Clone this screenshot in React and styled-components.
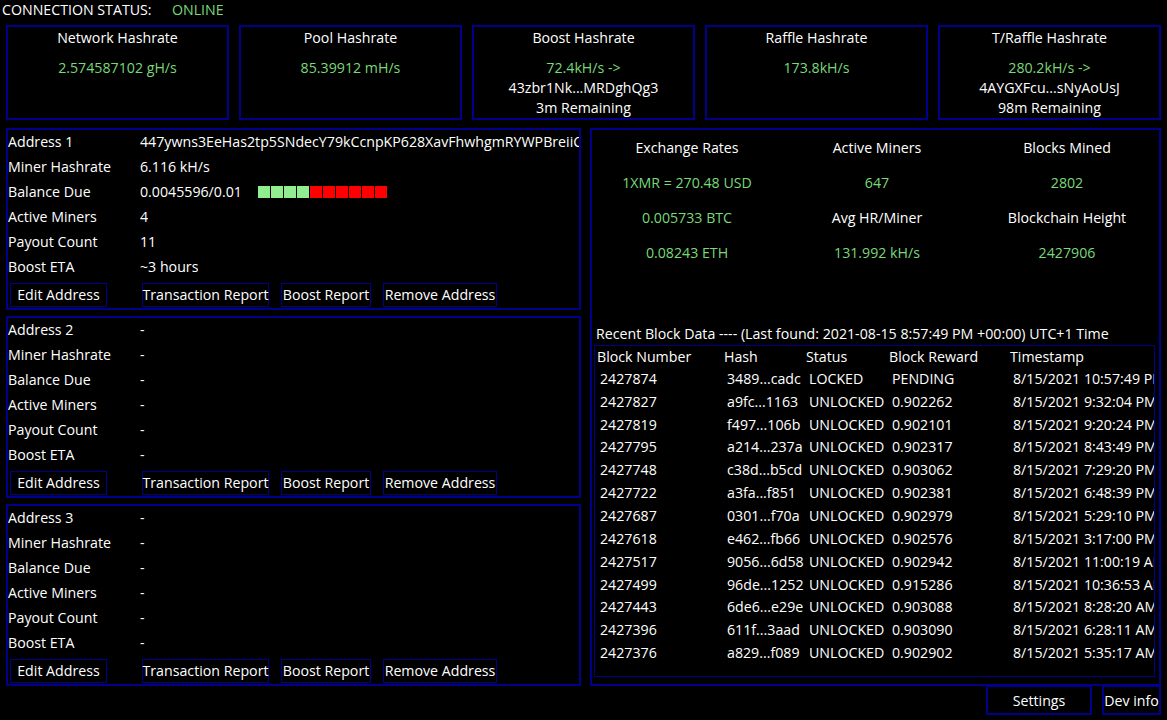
import React from "react";
import styled, { createGlobalStyle } from "styled-components";

const Global = createGlobalStyle`
  html, body { margin: 0; padding: 0; background: #000; }
  body { font-family: "Open Sans", "Noto Sans", sans-serif; font-size: 14.2px; color: #fff; }
  * { box-sizing: border-box; }
`;

const BLUE = "#00008b";
const GREEN = "#79d879";

const Page = styled.div`
  width: 1167px;
  height: 720px;
  background: #000;
  display: flex;
  flex-direction: column;
  overflow: hidden;
`;

const StatusBar = styled.div`
  height: 25px;
  display: flex;
  align-items: flex-start;
  padding: 0 0 0 2px;
  line-height: 20px;
  white-space: nowrap;
`;

const StatusLabel = styled.span`
  width: 170px;
`;

const Green = styled.span`
  color: ${GREEN};
`;

const Cards = styled.div`
  display: grid;
  grid-template-columns: repeat(5, 1fr);
  gap: 10px;
  padding: 0 6px;
  height: 93px;
`;

const Card = styled.div`
  border: 2px solid ${BLUE};
  display: flex;
  flex-direction: column;
  align-items: center;
  padding-top: 1px;
  line-height: 20px;
  white-space: nowrap;
`;

const CardTitle = styled.div`
  margin-bottom: 10px;
`;

const CardLine = styled.div`
  color: ${(p) => (p.$green ? GREEN : "#fff")};
`;

const Main = styled.div`
  margin-top: 10px;
  display: grid;
  grid-template-columns: 575px 571px;
  gap: 9px;
  padding-left: 6px;
  height: 557px;
`;

const LeftCol = styled.div`
  display: flex;
  flex-direction: column;
  gap: 6px;
`;

const AddressPanel = styled.div`
  border: 2px solid ${BLUE};
  height: 182px;
  display: flex;
  flex-direction: column;
  overflow: hidden;
`;

const InfoRow = styled.div`
  height: 25px;
  padding-bottom: 3px;
  display: flex;
  align-items: center;
  white-space: nowrap;
`;

const InfoLabel = styled.div`
  width: 132px;
  flex: none;
`;

const InfoValue = styled.div`
  display: flex;
  align-items: center;
  overflow: hidden;
`;

const Bar = styled.div`
  display: flex;
  gap: 1px;
  margin-left: 16px;
  margin-top: 2px;
`;

const Cell = styled.div`
  width: 12px;
  height: 12px;
  background: ${(p) => (p.$on ? "#90ee90" : "#ff0000")};
`;

const ButtonRow = styled.div`
  display: flex;
  margin-top: 3px;
`;

const Btn = styled.div`
  height: 24px;
  width: ${(p) => p.$w}px;
  margin-left: ${(p) => p.$ml}px;
  border: 1px solid ${BLUE};
  display: flex;
  align-items: center;
  justify-content: center;
  white-space: nowrap;
  padding-bottom: 1px;
`;

const RightPanel = styled.div`
  border: 2px solid ${BLUE};
  display: flex;
  flex-direction: column;
  overflow: hidden;
`;

const StatsGrid = styled.div`
  display: grid;
  grid-template-columns: repeat(3, 190px);
  grid-auto-rows: 35px;
`;

const Stat = styled.div`
  display: flex;
  align-items: center;
  justify-content: center;
  white-space: nowrap;
  padding-bottom: 1px;
  color: ${(p) => (p.$green ? GREEN : "#fff")};
`;

const RecentTitle = styled.div`
  margin-top: 54px;
  padding-left: 4px;
  height: 21px;
  line-height: 20px;
  white-space: nowrap;
`;

const Table = styled.div`
  margin: 0 4px 0 2px;
  height: 332px;
  border: 1px solid ${BLUE};
  overflow: hidden;
`;

const TRow = styled.div`
  display: grid;
  grid-template-columns: 127px 82px 83px 121px 200px;
  height: ${(p) => (p.$head ? 21 : 22.85)}px;
  align-items: center;
  white-space: nowrap;
`;

const TCell = styled.div`
  padding-left: ${(p) => (p.$head ? 2 : 5)}px;
`;

const Footer = styled.div`
  display: flex;
  justify-content: flex-end;
  gap: 10px;
  padding-right: 6px;
  height: 30px;
`;

const FooterBtn = styled.div`
  width: ${(p) => p.$w}px;
  border: 2px solid ${BLUE};
  display: flex;
  align-items: center;
  justify-content: center;
  white-space: nowrap;
`;

const cards = [
  { title: "Network Hashrate", lines: [["2.574587102 gH/s", true]] },
  { title: "Pool Hashrate", lines: [["85.39912 mH/s", true]] },
  {
    title: "Boost Hashrate",
    lines: [
      ["72.4kH/s ->", true],
      ["43zbr1Nk...MRDghQg3", false],
      ["3m Remaining", false],
    ],
  },
  { title: "Raffle Hashrate", lines: [["173.8kH/s", true]] },
  {
    title: "T/Raffle Hashrate",
    lines: [
      ["280.2kH/s ->", true],
      ["4AYGXFcu...sNyAoUsJ", false],
      ["98m Remaining", false],
    ],
  },
];

const labels = ["Miner Hashrate", "Balance Due", "Active Miners", "Payout Count", "Boost ETA"];

const addresses = [
  {
    name: "Address 1",
    addr: "447ywns3EeHas2tp5SNdecY79kCcnpKP628XavFhwhgmRYWPBreiiC",
    values: ["6.116 kH/s", "0.0045596/0.01", "4", "11", "~3 hours"],
    bar: 4,
  },
  { name: "Address 2", addr: "-", values: ["-", "-", "-", "-", "-"] },
  { name: "Address 3", addr: "-", values: ["-", "-", "-", "-", "-"] },
];

const buttons = [
  ["Edit Address", 97, 2],
  ["Transaction Report", 127, 35],
  ["Boost Report", 90, 12],
  ["Remove Address", 114, 12],
];

const stats = [
  ["Exchange Rates", false],
  ["Active Miners", false],
  ["Blocks Mined", false],
  ["1XMR = 270.48 USD", true],
  ["647", true],
  ["2802", true],
  ["0.005733 BTC", true],
  ["Avg HR/Miner", false],
  ["Blockchain Height", false],
  ["0.08243 ETH", true],
  ["131.992 kH/s", true],
  ["2427906", true],
];

const blocks = [
  ["2427874", "3489...cadc", "LOCKED", "PENDING", "8/15/2021 10:57:49 PM"],
  ["2427827", "a9fc...1163", "UNLOCKED", "0.902262", "8/15/2021 9:32:04 PM"],
  ["2427819", "f497...106b", "UNLOCKED", "0.902101", "8/15/2021 9:20:24 PM"],
  ["2427795", "a214...237a", "UNLOCKED", "0.902317", "8/15/2021 8:43:49 PM"],
  ["2427748", "c38d...b5cd", "UNLOCKED", "0.903062", "8/15/2021 7:29:20 PM"],
  ["2427722", "a3fa...f851", "UNLOCKED", "0.902381", "8/15/2021 6:48:39 PM"],
  ["2427687", "0301...f70a", "UNLOCKED", "0.902979", "8/15/2021 5:29:10 PM"],
  ["2427618", "e462...fb66", "UNLOCKED", "0.902576", "8/15/2021 3:17:00 PM"],
  ["2427517", "9056...6d58", "UNLOCKED", "0.902942", "8/15/2021 11:00:19 AM"],
  ["2427499", "96de...1252", "UNLOCKED", "0.915286", "8/15/2021 10:36:53 AM"],
  ["2427443", "6de6...e29e", "UNLOCKED", "0.903088", "8/15/2021 8:28:20 AM"],
  ["2427396", "611f...3aad", "UNLOCKED", "0.903090", "8/15/2021 6:28:11 AM"],
  ["2427376", "a829...f089", "UNLOCKED", "0.902902", "8/15/2021 5:35:17 AM"],
];

export default function App() {
  return (
    <Page>
      <Global />
      <StatusBar>
        <StatusLabel>CONNECTION STATUS:</StatusLabel>
        <Green>ONLINE</Green>
      </StatusBar>
      <Cards>
        {cards.map((c) => (
          <Card key={c.title}>
            <CardTitle>{c.title}</CardTitle>
            {c.lines.map(([t, g]) => (
              <CardLine key={t} $green={g}>
                {t}
              </CardLine>
            ))}
          </Card>
        ))}
      </Cards>
      <Main>
        <LeftCol>
          {addresses.map((a) => (
            <AddressPanel key={a.name}>
              <InfoRow>
                <InfoLabel>{a.name}</InfoLabel>
                <InfoValue>{a.addr}</InfoValue>
              </InfoRow>
              {labels.map((l, i) => (
                <InfoRow key={l}>
                  <InfoLabel>{l}</InfoLabel>
                  <InfoValue>
                    {a.values[i]}
                    {i === 1 && a.bar !== undefined && (
                      <Bar>
                        {Array.from({ length: 10 }).map((_, k) => (
                          <Cell key={k} $on={k < a.bar} />
                        ))}
                      </Bar>
                    )}
                  </InfoValue>
                </InfoRow>
              ))}
              <ButtonRow>
                {buttons.map(([t, w, ml]) => (
                  <Btn key={t} $w={w} $ml={ml}>
                    {t}
                  </Btn>
                ))}
              </ButtonRow>
            </AddressPanel>
          ))}
        </LeftCol>
        <RightPanel>
          <StatsGrid>
            {stats.map(([t, g], i) => (
              <Stat key={i} $green={g}>
                {t}
              </Stat>
            ))}
          </StatsGrid>
          <RecentTitle>
            Recent Block Data ---- (Last found: 2021-08-15 8:57:49 PM +00:00) UTC+1 Time
          </RecentTitle>
          <Table>
            <TRow $head>
              {["Block Number", "Hash", "Status", "Block Reward", "Timestamp"].map((h) => (
                <TCell key={h} $head>
                  {h}
                </TCell>
              ))}
            </TRow>
            {blocks.map((r) => (
              <TRow key={r[0]}>
                {r.map((c, i) => (
                  <TCell key={i}>{c}</TCell>
                ))}
              </TRow>
            ))}
          </Table>
        </RightPanel>
      </Main>
      <Footer>
        <FooterBtn $w={106}>Settings</FooterBtn>
        <FooterBtn $w={59}>Dev info</FooterBtn>
      </Footer>
    </Page>
  );
}
